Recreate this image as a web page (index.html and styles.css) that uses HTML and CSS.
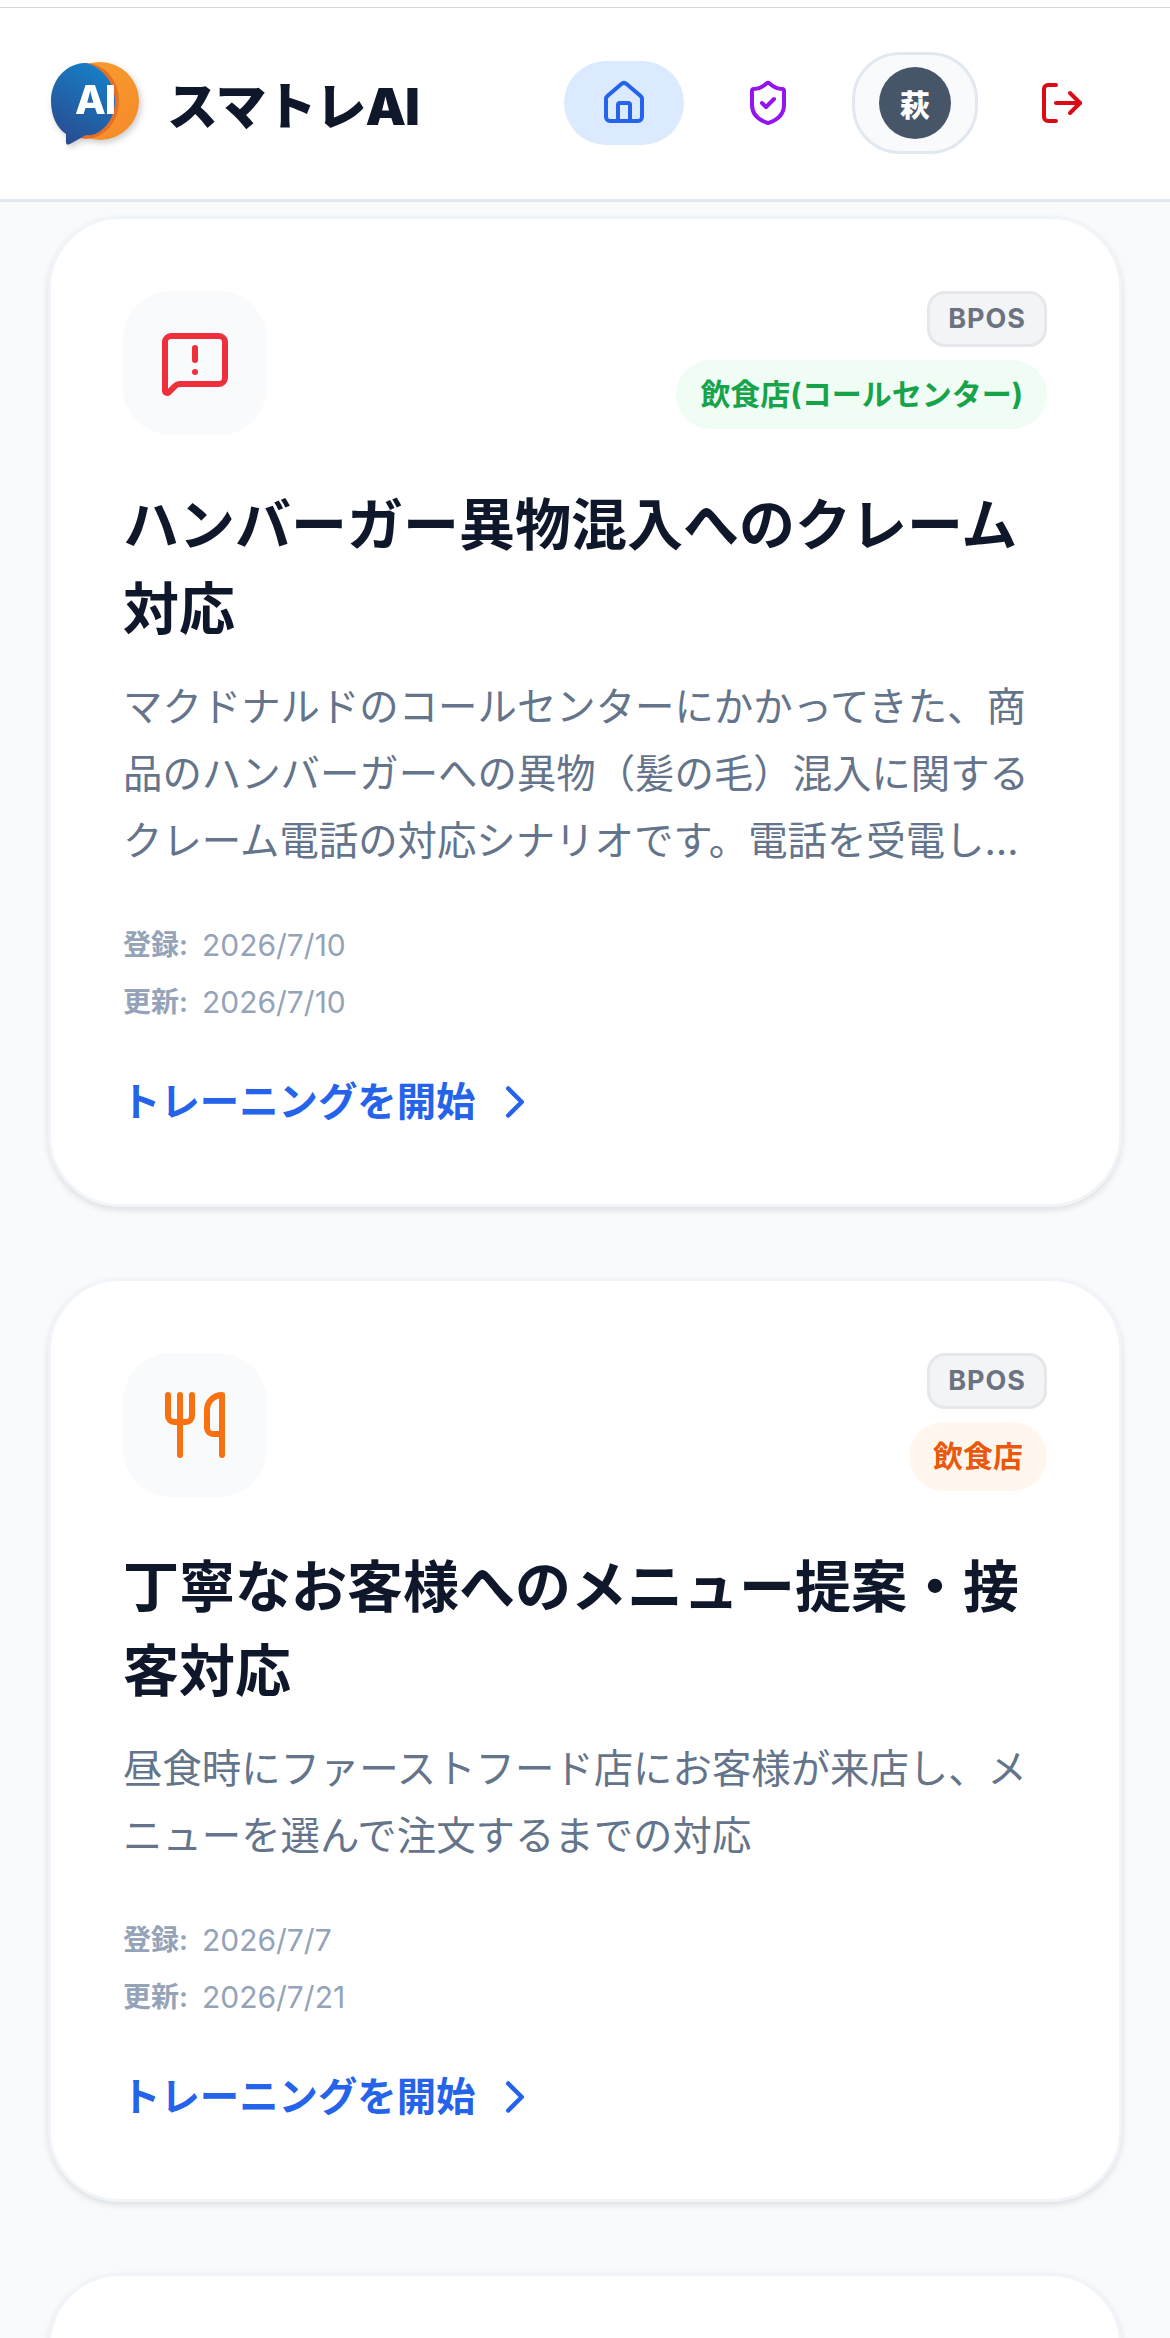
FILE: index.html
```html
<!DOCTYPE html>
<html lang="ja">
<head>
    <meta charset="UTF-8">
    <meta name="viewport" content="width=device-width, initial-scale=1.0">
    <title>スマトレAI</title>
    <link rel="stylesheet" href="styles.css">
</head>
<body>
    <div class="top-line"></div>
    <header class="app-header">
        <div class="brand">
            <svg class="brand-logo" viewBox="0 0 90 84" aria-hidden="true">
                <defs>
                    <linearGradient id="logo-orange" x1="0" y1="0" x2="1" y2="1">
                        <stop offset="0" stop-color="#f9a02f"/>
                        <stop offset="1" stop-color="#f58a2a"/>
                    </linearGradient>
                    <linearGradient id="logo-blue" x1="0.7" y1="0" x2="0.2" y2="1">
                        <stop offset="0" stop-color="#1580c8"/>
                        <stop offset="1" stop-color="#2a4a8e"/>
                    </linearGradient>
                </defs>
                <circle cx="50" cy="40" r="39" fill="url(#logo-orange)"/>
                <ellipse cx="36" cy="40" rx="33" ry="38" fill="#e56f26"/>
                <path d="M36 2 C16 2 1 19 1 40 C1 55 7 67 16 73 L16 81 C16 84 18 84 20 83 L36 74 C50 76 65 60 65 40 C65 22 52 6 36 2 Z" fill="url(#logo-blue)"/>
                <text class="logo-text" x="45" y="53" text-anchor="middle">AI</text>
            </svg>
            <span class="brand-name">スマトレAI</span>
        </div>
        <nav class="nav">
            <a class="nav-item nav-active">
                <svg class="nav-icon" viewBox="0 0 24 24"><path d="M15 21v-8a1 1 0 0 0-1-1h-4a1 1 0 0 0-1 1v8"/><path d="M3 10a2 2 0 0 1 .709-1.528l7-5.999a2 2 0 0 1 2.582 0l7 5.999A2 2 0 0 1 21 10v9a2 2 0 0 1-2 2H5a2 2 0 0 1-2-2z"/></svg>
            </a>
            <a class="nav-item nav-admin">
                <svg class="nav-icon" viewBox="0 0 24 24"><path d="M20 13c0 5-3.5 7.5-7.66 8.95a1 1 0 0 1-.67-.01C7.5 20.5 4 18 4 13V6a1 1 0 0 1 1-1c2 0 4.5-1.2 6.24-2.72a1.17 1.17 0 0 1 1.52 0C14.51 3.81 17 5 19 5a1 1 0 0 1 1 1z"/><path d="m9 12 2 2 4-4"/></svg>
            </a>
            <a class="avatar-button"><span class="avatar">萩</span></a>
            <a class="nav-item nav-logout">
                <svg class="nav-icon" viewBox="0 0 24 24"><path d="m16 17 5-5-5-5"/><path d="M21 12H9"/><path d="M9 21H5a2 2 0 0 1-2-2V5a2 2 0 0 1 2-2h4"/></svg>
            </a>
        </nav>
    </header>

    <main class="card-list">
        <article class="card">
            <div class="card-head">
                <div class="card-icon icon-red">
                    <svg viewBox="0 0 24 24"><path d="M22 17a2 2 0 0 1-2 2H6.828a2 2 0 0 0-1.414.586l-2.202 2.202A.71.71 0 0 1 2 21.286V5a2 2 0 0 1 2-2h16a2 2 0 0 1 2 2z"/><path d="M12 15h.01"/><path d="M12 7v4"/></svg>
                </div>
                <div class="badges">
                    <span class="badge-code">BPOS</span>
                    <span class="badge-genre genre-green">飲食店(コールセンター)</span>
                </div>
            </div>
            <h2 class="card-title">ハンバーガー異物混入へのクレーム対応</h2>
            <p class="card-desc">マクドナルドのコールセンターにかかってきた、商品のハンバーガーへの異物（髪の毛）混入に関するクレーム電話の対応シナリオです。電話を受電し…</p>
            <div class="card-meta">
                <div class="meta-row"><span class="meta-label">登録:</span><span>2026/7/10</span></div>
                <div class="meta-row"><span class="meta-label">更新:</span><span>2026/7/10</span></div>
            </div>
            <a class="card-link">トレーニングを開始
                <svg viewBox="0 0 24 24"><path d="m9 18 6-6-6-6"/></svg>
            </a>
        </article>

        <article class="card">
            <div class="card-head">
                <div class="card-icon icon-orange">
                    <svg viewBox="0 0 24 24"><path d="M3 2v7c0 1.1.9 2 2 2h4a2 2 0 0 0 2-2V2"/><path d="M7 2v20"/><path d="M21 15V2a5 5 0 0 0-5 5v6c0 1.1.9 2 2 2h3Zm0 0v7"/></svg>
                </div>
                <div class="badges">
                    <span class="badge-code">BPOS</span>
                    <span class="badge-genre genre-orange">飲食店</span>
                </div>
            </div>
            <h2 class="card-title">丁寧なお客様へのメニュー提案・接客対応</h2>
            <p class="card-desc">昼食時にファーストフード店にお客様が来店し、メニューを選んで注文するまでの対応</p>
            <div class="card-meta">
                <div class="meta-row"><span class="meta-label">登録:</span><span>2026/7/7</span></div>
                <div class="meta-row"><span class="meta-label">更新:</span><span>2026/7/21</span></div>
            </div>
            <a class="card-link">トレーニングを開始
                <svg viewBox="0 0 24 24"><path d="m9 18 6-6-6-6"/></svg>
            </a>
        </article>

        <article class="card card-next"></article>
    </main>
</body>
</html>
```

FILE: styles.css
```css
html, body {
    height: 100%;
    overflow: hidden;
}
body {
    margin: 0;
    font-family: 'Inter', 'Noto Sans CJK JP', sans-serif;
    background-color: #f9fafb;
    color: #0f172a;
}
.top-line {
    height: 7px;
    background: #fff;
    border-bottom: 1px solid #d8d8d8;
}
.app-header {
    display: flex;
    align-items: center;
    justify-content: space-between;
    box-sizing: border-box;
    height: 194px;
    padding: 0 48px 1px 50px;
    background: #fff;
    border-bottom: 3px solid #e2e8f0;
}
.brand {
    display: flex;
    align-items: center;
    gap: 27px;
}
.brand-logo {
    width: 90px;
    height: 84px;
    filter: drop-shadow(2px 3px 3px rgba(0,0,0,0.2));
}
.logo-text {
    font-family: 'Inter', sans-serif;
    font-size: 40px;
    font-weight: 800;
    letter-spacing: -1px;
    fill: #fff;
}
.brand-name {
    font-size: 51px;
    font-weight: 900;
    letter-spacing: -1px;
    color: #0f172a;
}
.nav {
    display: flex;
    align-items: center;
    gap: 24px;
}
.nav-item {
    display: flex;
    align-items: center;
    justify-content: center;
    width: 120px;
    height: 84px;
    border-radius: 42px;
}
.nav-icon {
    width: 48px;
    height: 48px;
    fill: none;
    stroke: currentColor;
    stroke-width: 2;
    stroke-linecap: round;
    stroke-linejoin: round;
}
.nav-active {
    background: #dbeafe;
    color: #2563eb;
}
.nav-admin {
    color: #9514f0;
}
.nav-logout {
    color: #dc0a14;
}
.avatar-button {
    display: flex;
    align-items: center;
    justify-content: center;
    box-sizing: border-box;
    width: 126px;
    height: 102px;
    background: #f8fafc;
    border: 3px solid #e2e8f0;
    border-radius: 48px;
}
.avatar {
    display: flex;
    align-items: center;
    justify-content: center;
    width: 72px;
    height: 72px;
    border-radius: 50%;
    background: #475569;
    color: #fff;
    font-size: 30px;
    font-weight: 900;
}
.card-list {
    display: flex;
    flex-direction: column;
    gap: 71px;
    padding: 14px 48px 0;
    background: #f9fafb;
}
.card {
    padding: 72px 72px 73px;
    background: #fff;
    border: 3px solid #f1f5f9;
    border-radius: 72px;
    box-shadow: 0 3px 6px rgba(15,23,42,0.12);
}
.card-next {
    min-height: 200px;
}
.card-head {
    display: flex;
    justify-content: space-between;
    align-items: flex-start;
    margin-bottom: 48px;
}
.card-icon {
    display: flex;
    align-items: center;
    justify-content: center;
    width: 144px;
    height: 144px;
    border-radius: 48px;
    background: #f8fafc;
}
.card-icon svg {
    width: 72px;
    height: 72px;
    fill: none;
    stroke: currentColor;
    stroke-width: 2;
    stroke-linecap: round;
    stroke-linejoin: round;
}
.icon-red {
    color: #ef303c;
}
.icon-orange {
    color: #f97010;
}
.badges {
    display: flex;
    flex-direction: column;
    align-items: flex-end;
    gap: 13px;
}
.badge-code {
    padding: 9px 18px;
    background: #f3f4f6;
    border: 3px solid #e5e7eb;
    border-radius: 18px;
    color: #6b7280;
    font-size: 27px;
    font-weight: 700;
    line-height: 32px;
    letter-spacing: 1px;
}
.badge-genre {
    padding: 12px 24px;
    border-radius: 36px;
    font-size: 30px;
    font-weight: 700;
    line-height: 45px;
}
.genre-green {
    background: #f0fdf4;
    color: #16a34a;
}
.genre-orange {
    background: #fff7ed;
    color: #ea580c;
}
.card-title {
    margin: 0 0 23px;
    font-size: 56px;
    font-weight: 700;
    line-height: 84px;
    color: #0f172a;
}
.card-desc {
    margin: 0 0 48px;
    font-size: 39.4px;
    line-height: 67px;
    color: #64748b;
}
.card-meta {
    display: flex;
    flex-direction: column;
    gap: 12px;
    margin-bottom: 48px;
    font-size: 30px;
    line-height: 45px;
    color: #94a3b8;
}
.meta-row {
    display: flex;
    gap: 14px;
}
.meta-label {
    font-size: 28px;
    font-weight: 600;
}
.card-link {
    display: flex;
    align-items: center;
    gap: 12px;
    margin-left: -2px;
    font-size: 39.4px;
    font-weight: 700;
    line-height: 58px;
    color: #2563eb;
}
.card-link svg {
    width: 54px;
    height: 54px;
    fill: none;
    stroke: currentColor;
    stroke-width: 2;
    stroke-linecap: round;
    stroke-linejoin: round;
}
```
